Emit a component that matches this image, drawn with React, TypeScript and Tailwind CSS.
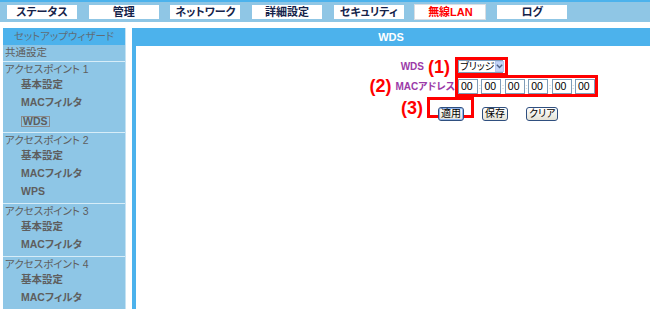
import React from "react";

const tabs = ["ステータス", "管理", "ネットワーク", "詳細設定", "セキュリティ", "無線LAN", "ログ"];

type Group = { title: string; items: string[] };

const groups: Group[] = [
  { title: "アクセスポイント 1", items: ["基本設定", "MACフィルタ", "WDS"] },
  { title: "アクセスポイント 2", items: ["基本設定", "MACフィルタ", "WPS"] },
  { title: "アクセスポイント 3", items: ["基本設定", "MACフィルタ"] },
  { title: "アクセスポイント 4", items: ["基本設定", "MACフィルタ"] },
];

const font = "font-['Liberation_Sans','Noto_Sans_CJK_JP',sans-serif] [font-feature-settings:'palt']";

function XpButton({ label, focused }: { label: string; focused?: boolean }) {
  return (
    <button
      className={`h-[14px] px-[2px] text-[10px] leading-none text-black whitespace-nowrap rounded-[3px] border border-[#2f4f7f] bg-gradient-to-b from-white to-[#e4e2d6] ${
        focused ? "shadow-[inset_0_0_0_1px_#8fb4ee]" : ""
      }`}
    >
      {label}
    </button>
  );
}

function Sidebar() {
  return (
    <div className="w-[123px] bg-[#8ec6e6] border-r border-[#c4e2f3] flex flex-col shrink-0 text-[10.5px] text-[#5e5e5e]">
      <div className="h-[18px] bg-[#4cb2ec] flex items-center justify-center text-[#5f6d78]">
        セットアップウィザード
      </div>
      <div className="h-[16px] flex items-center pl-[2px]">共通設定</div>
      {groups.map((g) => (
        <div key={g.title} className="border-t border-[#d7edf8]">
          <div className="h-[16px] flex items-center pl-[2px]">{g.title}</div>
          {g.items.map((it, i) => (
            <div key={g.title + i} className="h-[18px] pb-[4px] flex items-center pl-[18px] font-bold">
              {it === "WDS" ? (
                <span className="border border-[#8a8a8a] px-[1px] leading-[9px]">{it}</span>
              ) : (
                it
              )}
            </div>
          ))}
        </div>
      ))}
    </div>
  );
}

function WdsForm() {
  const octets = ["00", "00", "00", "00", "00", "00"];
  return (
    <div className="pt-[11px] flex flex-col">
      {/* row 1: mode */}
      <div className="flex items-center">
        <div className="w-[319px] flex items-center justify-end pr-[5px] gap-[4px]">
          <span className="text-[10px] font-bold text-[#9b3aa8]">WDS</span>
          <span className="text-[18px] font-bold text-[#ff0000] leading-none">(1)</span>
        </div>
        <div className="h-[19px] w-[53px] border-[3px] border-[#ff0000] flex items-center">
          <div className="h-[13px] w-[45px] border border-[#7f9db9] bg-white flex items-center justify-between">
            <span className="text-[10px] leading-none pl-[1px] text-black whitespace-nowrap">ブリッジ</span>
            <span className="h-[11px] w-[10px] bg-[#c3d4f7] border border-[#b4c6ee] flex items-center justify-center">
              <svg width="7" height="5" viewBox="0 0 7 5">
                <path d="M0.8 0.8 L3.5 3.5 L6.2 0.8" fill="none" stroke="#4d6185" strokeWidth="1.4" />
              </svg>
            </span>
          </div>
        </div>
      </div>

      {/* row 2: MAC address */}
      <div className="flex items-center -mt-[1px]">
        <div className="w-[319px] flex items-center justify-end gap-[4px]">
          <span className="text-[18px] font-bold text-[#ff0000] leading-none">(2)</span>
          <span className="text-[10px] font-bold text-[#9b3aa8]">MACアドレス</span>
        </div>
        <div className="h-[22px] w-[143px] border-[3px] border-[#ff0000] flex items-center">
          {octets.map((o, i) => (
            <React.Fragment key={i}>
              {i > 0 && <span className="w-[3.5px] text-[7px] text-[#9aa] leading-none text-center">:</span>}
              <div className="h-[15px] w-[20px] border border-[#7f9db9] bg-white text-[10.5px] leading-none text-black flex items-center pl-[2px]">
                {o}
              </div>
            </React.Fragment>
          ))}
        </div>
      </div>

      {/* row 3: buttons */}
      <div className="flex items-start">
        <div className="w-[291px] h-[21px] flex items-center justify-end pr-[4px]">
          <span className="text-[18px] font-bold text-[#ff0000] leading-none">(3)</span>
        </div>
        <div className="h-[21px] w-[47px] border-[3px] border-[#ff0000] pl-[8px]">
          <XpButton label="適用" focused />
        </div>
        <div className="pt-[3px] pl-[8px]">
          <XpButton label="保存" />
        </div>
        <div className="pt-[3px] pl-[18px]">
          <XpButton label="クリア" />
        </div>
      </div>
    </div>
  );
}

export default function App() {
  return (
    <div className={`w-[650px] h-[309px] overflow-hidden bg-white ${font}`}>
      {/* Top tab bar */}
      <div className="h-[22px] bg-[#8fc6e5] border-t-2 border-[#4cb2ec] flex items-center pl-[7px] gap-[11.7px]">
        {tabs.map((t) => (
          <div
            key={t}
            className={`w-[70px] h-[14px] bg-white flex items-center justify-center text-[11px] font-bold leading-none ${
              t === "無線LAN" ? "text-[#ff0000] outline outline-1 outline-[#d9dde2]" : "text-[#14224a]"
            }`}
          >
            {t}
          </div>
        ))}
      </div>

      <div className="flex pt-[6px] pl-[3px] h-[287px]">
        <Sidebar />

        {/* Main panel */}
        <div className="ml-[6px] flex-1 flex flex-col">
          <div className="h-[18px] bg-[#4cb2ec] flex items-center justify-center text-white text-[11px] font-bold">
            WDS
          </div>
          <div className="flex-1 border-l-4 border-[#4cb2ec]">
            <WdsForm />
          </div>
        </div>
      </div>
    </div>
  );
}
